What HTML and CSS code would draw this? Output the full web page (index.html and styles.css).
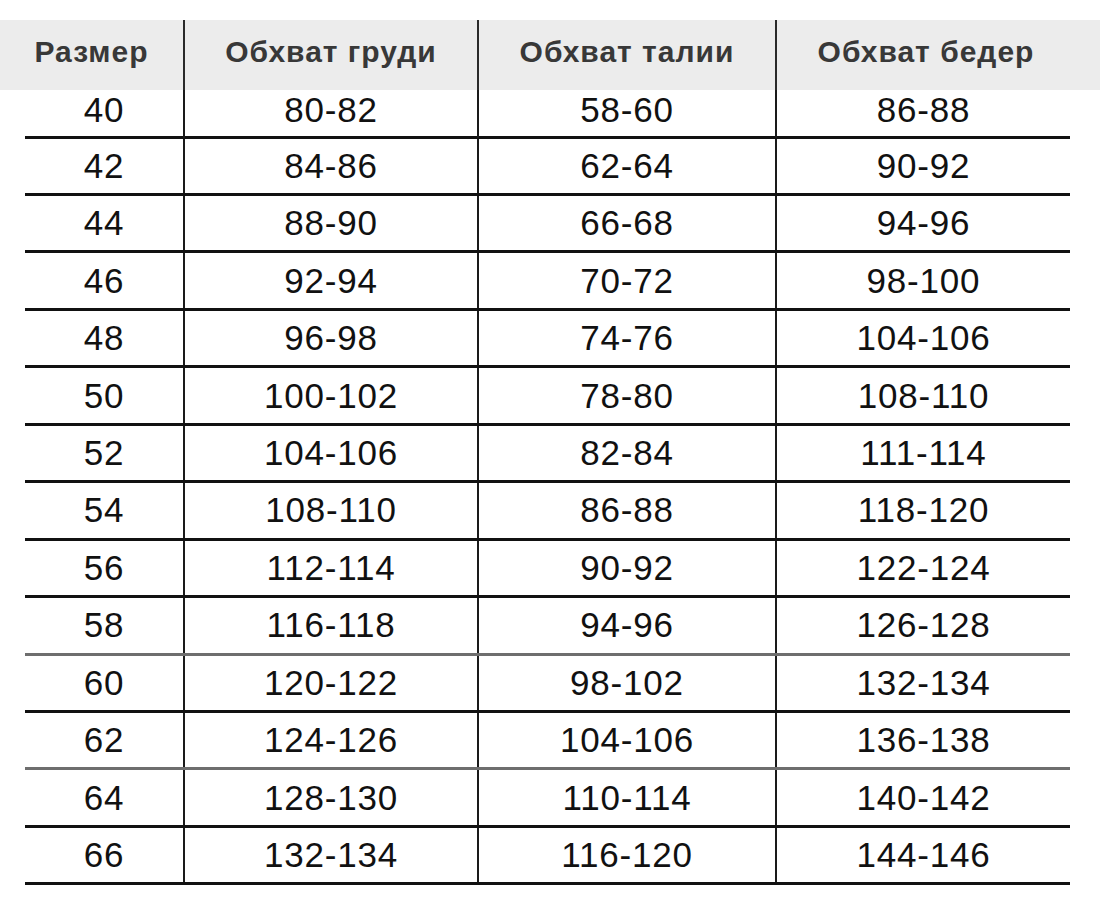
FILE: index.html
```html
<!DOCTYPE html>
<html lang="ru">
<head>
<meta charset="utf-8">
<title>Таблица размеров</title>
<link rel="stylesheet" href="styles.css">
</head>
<body>
<div class="sheet">
  <div class="head">
    <div class="hc">Размер</div>
    <div class="hc">Обхват груди</div>
    <div class="hc">Обхват талии</div>
    <div class="hc">Обхват бедер</div>
    <div class="hpad"></div>
  </div>
  <div class="rows">
    <div class="row first"><div class="c">40</div><div class="c">80-82</div><div class="c">58-60</div><div class="c">86-88</div></div>
    <div class="row"><div class="c">42</div><div class="c">84-86</div><div class="c">62-64</div><div class="c">90-92</div></div>
    <div class="row"><div class="c">44</div><div class="c">88-90</div><div class="c">66-68</div><div class="c">94-96</div></div>
    <div class="row"><div class="c">46</div><div class="c">92-94</div><div class="c">70-72</div><div class="c">98-100</div></div>
    <div class="row"><div class="c">48</div><div class="c">96-98</div><div class="c">74-76</div><div class="c">104-106</div></div>
    <div class="row"><div class="c">50</div><div class="c">100-102</div><div class="c">78-80</div><div class="c">108-110</div></div>
    <div class="row"><div class="c">52</div><div class="c">104-106</div><div class="c">82-84</div><div class="c">111-114</div></div>
    <div class="row"><div class="c">54</div><div class="c">108-110</div><div class="c">86-88</div><div class="c">118-120</div></div>
    <div class="row"><div class="c">56</div><div class="c">112-114</div><div class="c">90-92</div><div class="c">122-124</div></div>
    <div class="row soft"><div class="c">58</div><div class="c">116-118</div><div class="c">94-96</div><div class="c">126-128</div></div>
    <div class="row"><div class="c">60</div><div class="c">120-122</div><div class="c">98-102</div><div class="c">132-134</div></div>
    <div class="row soft"><div class="c">62</div><div class="c">124-126</div><div class="c">104-106</div><div class="c">136-138</div></div>
    <div class="row"><div class="c">64</div><div class="c">128-130</div><div class="c">110-114</div><div class="c">140-142</div></div>
    <div class="row"><div class="c">66</div><div class="c">132-134</div><div class="c">116-120</div><div class="c">144-146</div></div>
  </div>
</div>
</body>
</html>
```

FILE: styles.css
```css
html, body {
  margin: 0;
  padding: 0;
  background: #ffffff;
}

.sheet {
  width: 1100px;
  padding-top: 20px;
  font-family: "Liberation Sans", Arial, sans-serif;
}

.head {
  display: grid;
  grid-template-columns: 183px 294px 298px 300px 1fr;
  height: 70px;
  background: #ececec;
}

.hc {
  display: flex;
  align-items: center;
  justify-content: center;
  padding-bottom: 6px;
  font-size: 30px;
  font-weight: bold;
  color: #383838;
  letter-spacing: 1px;
  white-space: nowrap;
}

.hc + .hc {
  border-left: 2px solid #2a2a2a;
}

.rows {
  margin-left: 25px;
  width: 1045px;
}

.row {
  display: grid;
  grid-template-columns: 158px 294px 298px 295px;
  box-sizing: border-box;
  height: 57.46px;
  border-bottom: 3px solid #111111;
}

.row.first {
  height: 48.5px;
}

.row.first .c {
  padding-bottom: 8px;
}

.row.soft {
  border-bottom-color: #6e6e6e;
}

.c {
  display: flex;
  align-items: center;
  justify-content: center;
  font-size: 35px;
  color: #111111;
  letter-spacing: 0.8px;
}

.c + .c {
  border-left: 2px solid #1a1a1a;
}
```
